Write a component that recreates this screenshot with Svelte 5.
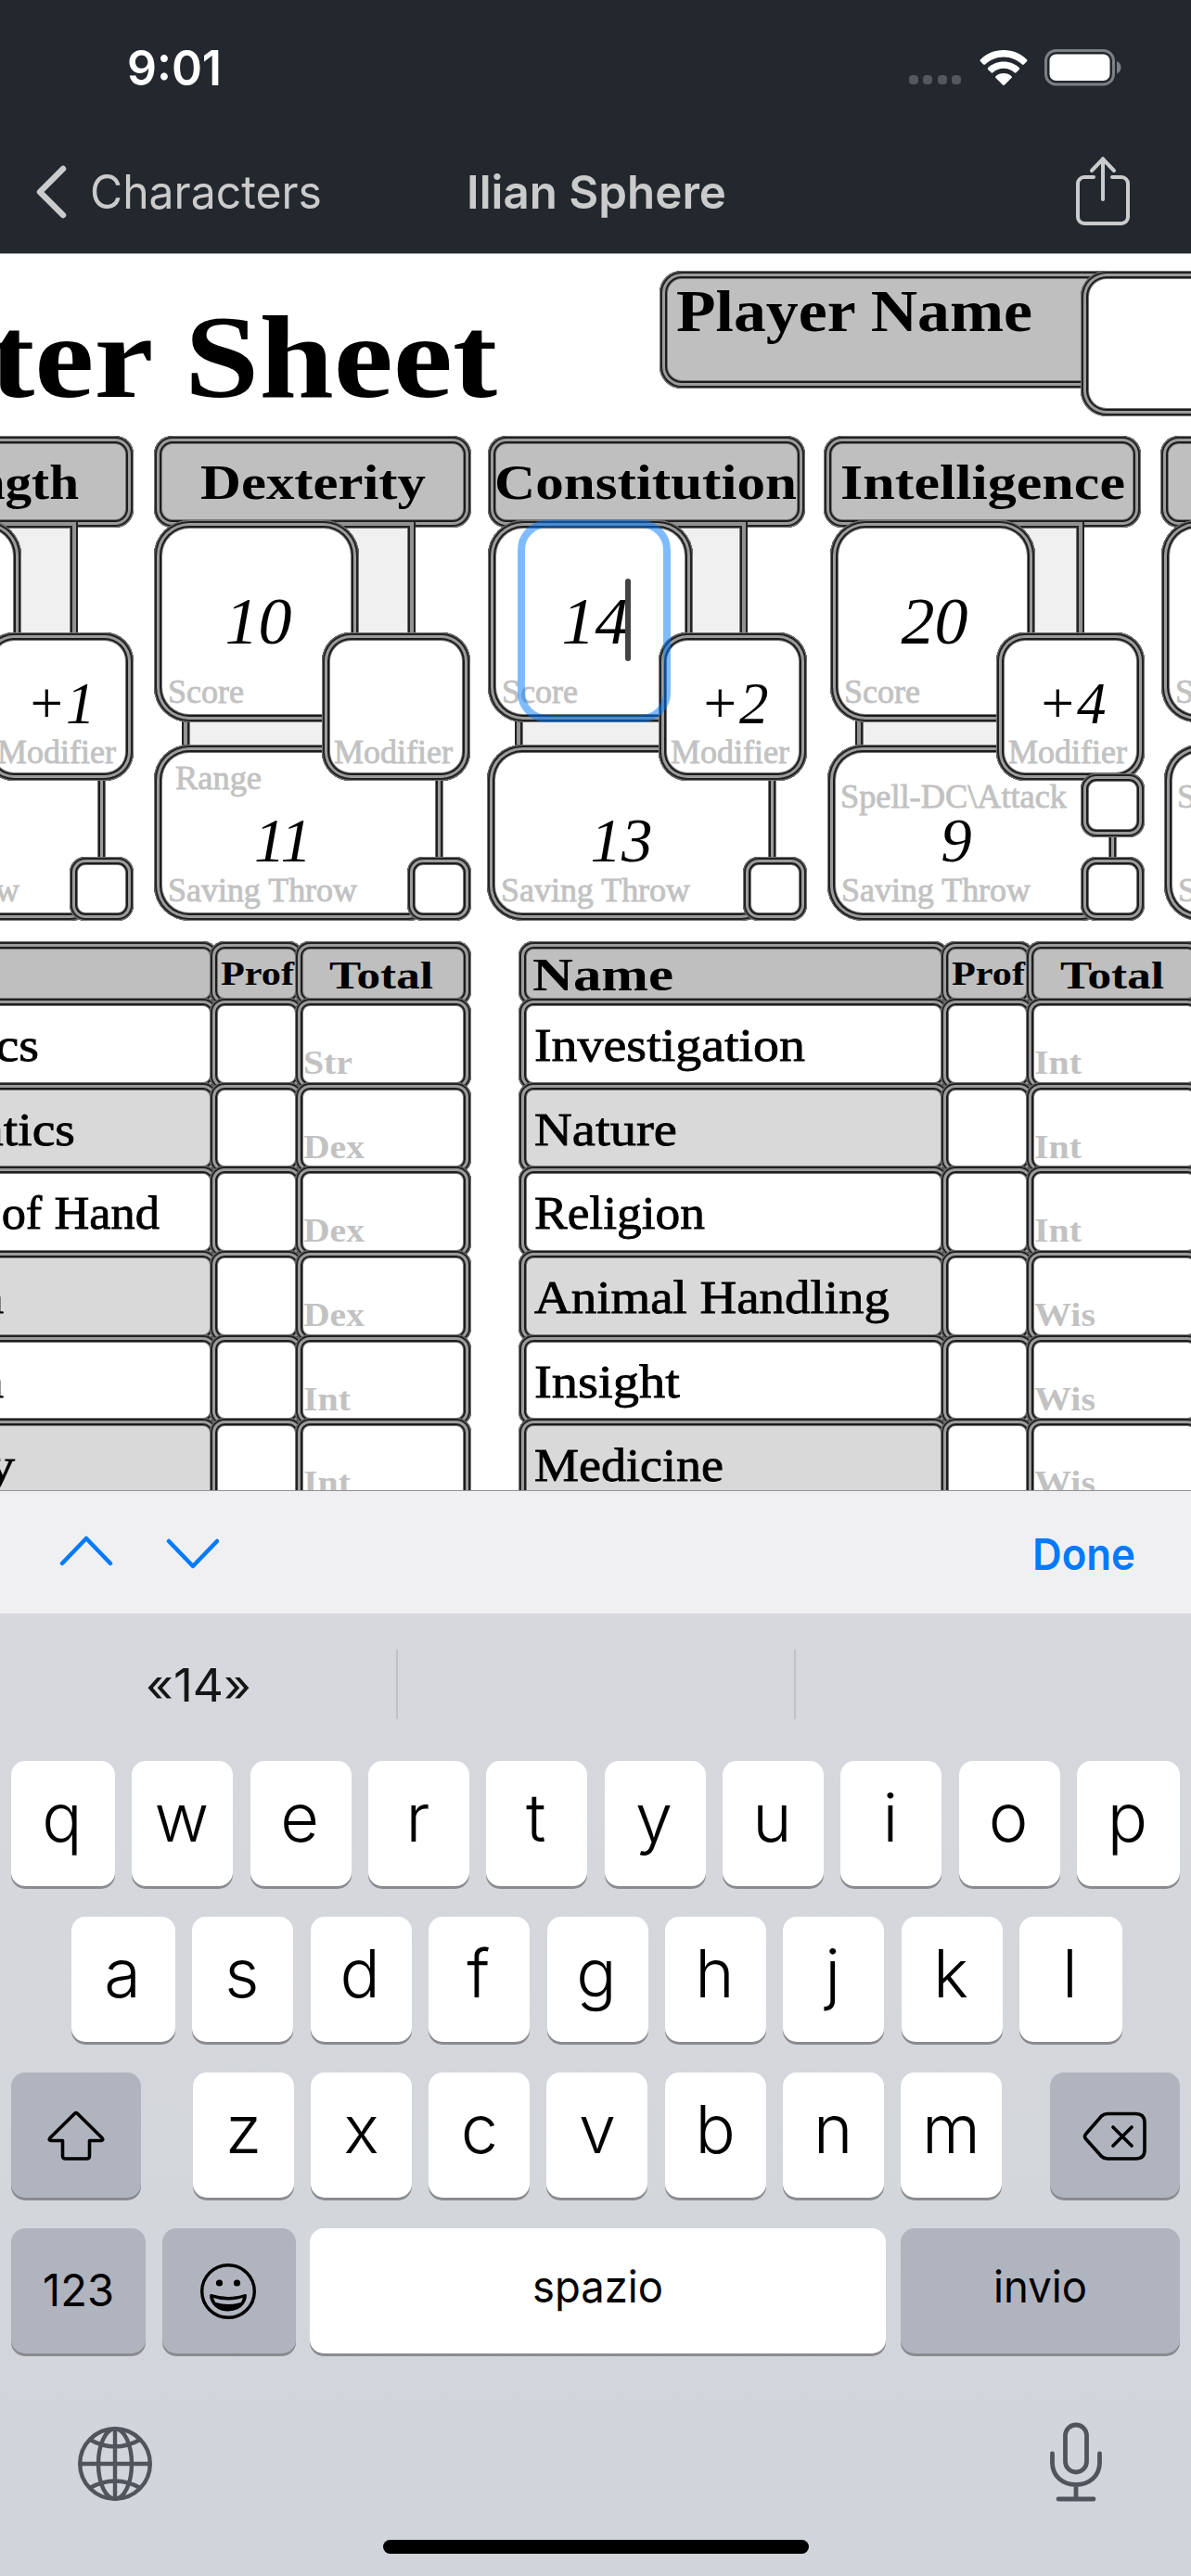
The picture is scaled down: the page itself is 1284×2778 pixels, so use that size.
<script>
  const abilities = [
    { name: 'Strength', nameW: 212, nameX: 71, mod: '+1', score: '12', save: '12', sx: 0, mx: 182, lx: 0, cx: 273, vx: 282, dx: 0 },
    { name: 'Dexterity', nameW: 243, nameX: 50, mod: '', score: '10', save: '11', sub: 'Range', subW: 93, subX: 23, subY: 25, sx: 0, mx: 181, lx: 0, cx: 273, vx: 282, dx: 0 },
    { name: 'Constitution', nameW: 326, nameX: 7, mod: '+2', score: '14', save: '13', focus: true, sx: 0, mx: 184, lx: -1, cx: 275, vx: 280, dx: 6 },
    { name: 'Intelligence', nameW: 307, nameX: 18, mod: '+4', score: '20', save: '9', sub: 'Spell-DC\\Attack', subW: 244, subX: 14, subY: 45, extra: true, sx: 7, mx: 186, lx: 4, cx: 277, vx: 281, dx: 0 },
    { name: 'Wisdom', nameW: 212, nameX: 66, mod: '', score: '', save: '', sub: 'Spell-DC\\Attack', subW: 244, subX: 14, subY: 45, sx: 1, mx: 185, lx: 4, cx: 276, vx: 281, dx: 0 }
  ];
  const tables = [
    {
      side: 'left', title: false,
      rows: [
        ['Athletics', 202, 'Str', 53], ['Acrobatics', 241, 'Dex', 66], ['Sleight of Hand', 332, 'Dex', 66],
        ['Stealth', 164, 'Dex', 66], ['Arcana', 164, 'Int', 51], ['History', 176, 'Int', 51]
      ]
    },
    {
      side: 'right', title: true,
      rows: [
        ['Investigation', 292, 'Int', 51], ['Nature', 154, 'Int', 51], ['Religion', 184, 'Int', 51],
        ['Animal Handling', 383, 'Wis', 66], ['Insight', 157, 'Wis', 66], ['Medicine', 204, 'Wis', 66]
      ]
    }
  ];
  const row1 = [...'qwertyuiop'];
  const row2 = [...'asdfghjkl'];
  const row3 = [...'zxcvbnm'];
</script>

<!-- Text fitted to a given width; the box is as tall as the capitals, so its bottom is the baseline. -->
{#snippet fit(text, width, size, cls)}
  <svg class="fit {cls}" {width} height={Math.round(size * 0.66)} font-size={size}>
    <text x="0" y={Math.round(size * 0.66)} textLength={width} lengthAdjust="spacingAndGlyphs">{text}</text>
  </svg>
{/snippet}

<div class="screen">
  <header>
    <div class="status">
      <div class="time">{@render fit('9:01', 102, 52, 'ui semi white')}</div>
      <div class="indicators">
        <div class="dots"><i></i><i></i><i></i><i></i></div>
        <svg class="wifi" width="52" height="38" viewBox="0 0 52 38" fill="#fff">
          <path d="M26 0C36 0 45 4 51 10.3c.6.6.6 1.3 0 1.900l-3.200 3.200c-.6.6-1.300.6-1.900 0C40.700 10.500 33.800 7.400 26 7.400S11.300 10.500 6.100 15.400c-.6.6-1.300.6-1.900 0L1 12.200c-.6-.6-.6-1.300 0-1.900C7 4 16 0 26 0z" />
          <path d="M26 12.500c6.600 0 12.500 2.500 16.800 6.500.6.6.6 1.300 0 1.900l-3.300 3.300c-.6.6-1.300.6-1.900 0-3.100-2.800-7.100-4.500-11.600-4.500s-8.500 1.700-11.600 4.500c-.6.6-1.300.6-1.900 0l-3.300-3.300c-.6-.6-.6-1.300 0-1.900 4.300-4 10.200-6.500 16.800-6.500z" />
          <path d="M26 25c3.300 0 6.200 1.200 8.500 3.200.6.5.6 1.200 0 1.800l-7.500 7.500c-.6.6-1.400.6-2 0L17.500 30c-.6-.6-.6-1.300 0-1.800 2.300-2 5.200-3.200 8.500-3.200z" />
        </svg>
        <svg class="battery" width="83" height="40" viewBox="0 0 83 40">
          <rect x="1.500" y="1.500" width="73" height="36.500" rx="11" fill="none" stroke="#7d8085" stroke-width="3" />
          <rect x="5.500" y="5.500" width="65" height="28.500" rx="7" fill="#fff" />
          <path d="M78 13c6 2.500 6 11 0 13.500z" fill="#7d8085" />
        </svg>
      </div>
    </div>
    <nav>
      <svg class="back" width="34" height="58" viewBox="0 0 34 58"><path d="M30 4 5 29l25 25" fill="none" stroke="#cbcbcb" stroke-width="6.500" stroke-linecap="round" stroke-linejoin="round" /></svg>
      <div class="crumb">{@render fit('Characters', 250, 50, 'ui light')}</div>
      <div class="name">{@render fit('Ilian Sphere', 280, 50, 'ui semi light')}</div>
      <svg class="share" width="60" height="76" viewBox="0 0 60 76" fill="none" stroke="#cbcbcb" stroke-width="4" stroke-linecap="round" stroke-linejoin="round">
        <path d="M20 23H10a7 7 0 0 0-7 7v36a7 7 0 0 0 7 7h40a7 7 0 0 0 7-7V30a7 7 0 0 0-7-7H40" />
        <path d="M30 47V3M18 16 30 3.500 42 16" />
      </svg>
    </nav>
  </header>

  <main>
    <div class="top">
      <div class="title">{@render fit('Character Sheet', 1004, 128, 'serif bold')}</div>
      <div class="player">
        <div class="frame label">{@render fit('Player Name', 384, 64, 'serif bold')}</div>
        <div class="frame field"></div>
      </div>
    </div>

    <div class="abilities">
      {#each abilities as a}
        <section style="--sx:{a.sx}px;--mx:{a.mx}px;--lx:{a.lx}px;--cx:{a.cx}px;--vx:{a.vx}px;--nx:{a.nameX}px;--dx:{a.dx}px">
          <div class="frame head">{@render fit(a.name, a.nameW, 53, 'serif bold')}</div>
          <div class="link down"></div>
          <div class="link across"></div>
          <div class="frame save">
            <div class="sub" style="--px:{a.subX ?? 0}px;--py:{a.subY ?? 0}px">
              {#if a.sub}{@render fit(a.sub, a.subW, 35, 'serif faint book')}{/if}
            </div>
            <span class="value">{a.save}</span>
            <div class="foot">{@render fit('Saving Throw', 204, 35, 'serif faint book')}</div>
          </div>
          <div class="frame score">
            <span class="value">{a.score}</span>
            <div class="foot">{@render fit('Score', 82, 35, 'serif faint book')}</div>
          </div>
          <div class="frame mod">
            <span class="value">{a.mod}</span>
            <div class="foot">{@render fit('Modifier', 128, 35, 'serif faint book')}</div>
          </div>
          {#if a.extra}<div class="frame check upper"></div>{/if}
          <div class="frame check"></div>
          {#if a.focus}<div class="focus"></div><div class="caret"></div>{/if}
        </section>
      {/each}
    </div>

    <div class="tables">
      {#each tables as t}
        <div class="table {t.side}">
          <div class="row first">
            <div class="frame cell skill">{#if t.title}{@render fit('Name', 152, 50, 'serif bold')}{/if}</div>
            <div class="frame cell prof">{@render fit('Prof', 79, 36, 'serif bold')}</div>
            <div class="frame cell total">{@render fit('Total', 112, 43, 'serif bold')}</div>
          </div>
          {#each t.rows as r}
            <div class="row">
              <div class="frame cell skill">{@render fit(r[0], r[1], 51, 'serif dense')}</div>
              <div class="frame cell prof"></div>
              <div class="frame cell total">{@render fit(r[2], r[3], 36, 'serif bold faint')}</div>
            </div>
          {/each}
        </div>
      {/each}
    </div>
  </main>

  <div class="accessory">
    <svg width="172" height="36" viewBox="0 0 172 36" fill="none" stroke="#007aff" stroke-width="4.500" stroke-linecap="round" stroke-linejoin="round">
      <path d="M3 30 29 3l26 27M118 6l26 27 26-27" />
    </svg>
    {@render fit('Done', 111, 47, 'ui semi blue')}
  </div>

  <div class="keyboard">
    <div class="suggest">
      <div>{@render fit('«14»', 114, 49, 'ui ink')}</div>
      <div></div>
      <div></div>
    </div>
    <div class="keys r1">{#each row1 as k}<div class="key">{k}</div>{/each}</div>
    <div class="keys r2">{#each row2 as k}<div class="key">{k}</div>{/each}</div>
    <div class="keys r3">
      <div class="key dark">
        <svg width="62" height="56" viewBox="0 0 62 56" fill="none" stroke="#000" stroke-width="3.600" stroke-linejoin="round"><path d="M29.300 3.500Q31 2 32.700 3.500L59 29.500Q61 32 58 32.500H45.500V49q0 3-3 3h-23q-3 0-3-3V32.500H4Q1 32 3 29.500z" /></svg>
      </div>
      <div class="letters">{#each row3 as k}<div class="key">{k}</div>{/each}</div>
      <div class="key dark">
        <svg width="70" height="54" viewBox="0 0 70 54" fill="none" stroke="#000" stroke-width="3.600" stroke-linejoin="round" stroke-linecap="round"><path d="M20.500 5Q23.500 2.500 27 2.500H57.500Q67 2.500 67 12V41.500Q67 51 57.500 51H27q-3.500 0-6.500-2.500L3.500 29.500q-2-2.500 0-5zM33 17l20 20M53 17 33 37" /></svg>
      </div>
    </div>
    <div class="keys r4">
      <div class="key dark">{@render fit('123', 77, 48, 'ui')}</div>
      <div class="key dark">
        <svg width="60" height="60" viewBox="0 0 60 60"><circle cx="30" cy="30" r="28.300" fill="none" stroke="#000" stroke-width="3.400" /><circle cx="20.500" cy="21" r="3.600" /><circle cx="39.500" cy="21" r="3.600" /><path d="M11.500 34.500Q30 40.500 48.500 34.500C48 44 40 50 30 50S12 44 11.500 34.500z" stroke="#000" stroke-width="3" stroke-linejoin="round" /><path d="M14 37Q30 42 46 37Q45 40 43.500 42Q30 46 16.500 42Q15 40 14 37z" fill="#b0b5c0" /></svg>
      </div>
      <div class="key">{@render fit('spazio', 141, 48, 'ui')}</div>
      <div class="key dark">{@render fit('invio', 101, 48, 'ui')}</div>
    </div>
    <div class="bottom">
      <svg width="80" height="82" viewBox="0 0 80 82" fill="none" stroke="#50555d" stroke-width="4.400"><circle cx="40" cy="41" r="37.800" /><ellipse cx="40" cy="41" rx="18" ry="37.800" /><path d="M40 3v76M2 41h76M13 15Q40 30 67 15M13 67Q40 52 67 67" /></svg>
      <svg width="56" height="86" viewBox="0 0 56 86" fill="none" stroke="#50555d" stroke-width="4.800" stroke-linecap="round"><rect x="16.500" y="3" width="23" height="51" rx="11.500" /><path d="M2.500 34v10c0 14 11 23.500 25.500 23.500S53.500 58 53.500 44V34M28 67.500v15M9 83h38" /></svg>
    </div>
    <div class="home"></div>
  </div>
</div>

<style>
  :global(body) { margin: 0; }
  .screen { width: 1284px; height: 2778px; overflow: hidden; display: flex; flex-direction: column; font-family: Inter, "Liberation Sans", sans-serif; background: #fff; }
  .screen * { box-sizing: border-box; }
  svg { display: block; flex: none; }
  .fit { overflow: visible; fill: #000; }
  .ui { font-family: Inter, sans-serif; }
  .serif { font-family: "Liberation Serif", serif; }
  .bold { font-weight: 700; }
  .semi { font-weight: 600; }
  .white { fill: #fff; }
  .light { fill: #cbcbcb; }
  .blue { fill: #007aff; }
  .ink { fill: #151515; }
  .faint { fill: #c2c2c2; }
  .book { stroke: #c2c2c2; stroke-width: .8px; }
  .dense { stroke: #000; stroke-width: .8px; }

  header { height: 274px; flex: none; background: #23282e; border-bottom: 1px solid #a5a7a9; }
  .status { height: 146px; display: flex; justify-content: space-between; padding: 53px 75px 0 137px; }
  .time { padding-top: 5px; }
  .indicators { display: flex; }
  .dots { display: flex; gap: 5.500px; padding-top: 28px; margin-right: 20px; }
  .dots i { width: 10px; height: 10px; border-radius: 4px; background: #54585d; }
  .wifi { margin: 1px 18px 0 0; }
  nav { display: flex; align-items: flex-start; padding: 22px 65px 0 38px; }
  .back { margin-top: 10px; }
  .crumb { margin: 24px 0 0 25px; }
  .name { margin: 24px 0 0 156px; }
  .share { margin-left: auto; }

  main { height: 1333px; flex: none; overflow: hidden; background: #fff; }
  .frame { box-shadow: inset 0 0 0 1px #777, inset 0 0 0 3px #222, inset 0 0 0 6px #9b9b9b, inset 0 0 0 8px #1c1c1c, inset 0 0 0 9px #777; background: #fff; }
  .top { height: 196px; display: flex; }
  .title { margin: 70px 0 0 -468px; }
  .player { display: flex; align-items: flex-start; margin: 18px 0 0 175px; }
  .label { width: 494px; height: 127px; flex: none; border-radius: 24px; background: #bfbfbf; padding: 23px 0 0 18px; }
  .field { width: 300px; height: 157px; flex: none; margin-left: -40px; border-radius: 28px; }

  .abilities { display: grid; grid-template-columns: 364px 360px 362px 363px 342px; width: 1791px; height: 545px; margin-left: -198px; }
  section { position: relative; width: 342px; }
  .head { height: 99px; border-radius: 20px; background: #bfbfbf; padding: 33px 0 0 var(--nx); }
  .link { position: absolute; background: #f0f0f0; box-shadow: inset 0 0 0 2px #222, inset 0 0 0 6px #929292, inset 0 0 0 8px #222, inset 0 0 0 9px #777; }
  .down { left: 150px; width: calc(var(--vx) - 150px); top: 91px; height: 140px; }
  .across { left: calc(var(--lx) + 30px); width: 200px; top: 300px; height: 44px; }
  .score, .mod, .save { position: absolute; display: flex; flex-direction: column; align-items: center; }
  .foot { margin-top: auto; align-self: flex-start; }
  .score { left: var(--sx); top: 91px; width: 221px; height: 218px; border-radius: 38px; padding: 73px 0 21px; }
  .score .foot, .save .foot { padding-left: 15px; }
  .mod { left: var(--mx); top: 212px; width: 160px; height: 160px; border-radius: 31px; padding: 46px 0 19px; }
  .mod .foot { padding-left: 13px; }
  .save { left: var(--lx); top: 333px; width: 312px; height: 190px; border-radius: 38px; padding-bottom: 21px; }
  .sub { height: 70px; align-self: flex-start; padding: var(--py) 0 0 var(--px); }
  .value { font: italic 72px/1 "Liberation Serif", serif; color: #000; height: 1em; }
  .score .value { padding-left: calc(4px + var(--dx)); }
  .mod .value { font-size: 63px; padding-left: 3px; }
  .save .value { font-size: 67px; margin-left: calc(var(--dx) * 2); padding-right: 34px; }
  .check { position: absolute; left: var(--cx); top: 454px; width: 69px; height: 69px; border-radius: 17px; }
  .upper { top: 364px; }
  .focus { position: absolute; left: 32px; top: 91px; width: 165px; height: 218px; border: 8px solid rgba(0, 122, 255, .5); border-radius: 32px; }
  .caret { position: absolute; left: 148px; top: 154px; width: 6px; height: 89px; border-radius: 3px; background: #444; }

  .tables { display: flex; }
  .table { flex: none; }
  .left { margin-left: -177px; --skill: 412px; }
  .right { margin-left: 51px; --skill: 464px; }
  .row { display: flex; height: 99.700px; margin-top: -9px; }
  .row.first { height: 70px; margin-top: 0; }
  .cell { border-radius: 16px; margin-left: -9px; }
  .skill { width: var(--skill); margin-left: 0; padding: 34px 0 0 17px; }
  .prof { width: 101px; }
  .total { width: 190px; padding: 58px 0 0 9px; }
  .row:nth-child(odd) .skill { background: #d9d9d9; }
  .row.first .cell { background: #bfbfbf; }
  .row.first .skill { background: #bfbfbf; padding: 20px 0 0 15px; }
  .row.first .prof { padding: 23px 0 0 12px; }
  .row.first .total { padding: 23px 0 0 37px; }

  .accessory { height: 133px; flex: none; border-top: 1px solid #929396; background: #f0f0f2; display: flex; justify-content: space-between; align-items: flex-start; padding: 48px 60px 0 64px; }
  .accessory .fit { margin-top: 6px; }
  .keyboard { flex: 1; background: linear-gradient(#d6d8dd, #d3d6db 60%, #d1d4da); }
  .suggest { height: 159px; display: flex; padding-top: 39px; }
  .suggest div { height: 75px; width: 429px; border-right: 2px solid #bfc1c6; display: flex; justify-content: center; padding-top: 24px; }
  .suggest div:last-child { border: 0; width: 426px; }
  .keys { display: grid; justify-content: space-between; height: 135px; margin-bottom: 33px; padding: 0 12px; }
  .key { height: 135px; border-radius: 15px; background: #fff; box-shadow: 0 3px 0 #898b8f; display: flex; justify-content: center; font-size: 72px; font-weight: 350; line-height: 122px; color: #000; }
  .dark { background: #b0b4bf; }
  .r4 .key { font-weight: 400; }
  .r1 { grid-template-columns: 112px repeat(8, 109px) 111px; }
  .r2 { grid-template-columns: 112px repeat(7, 109px) 111px; padding: 0 74px 0 77px; }
  .r1 .key, .r2 .key { padding-right: 2px; }
  .r3 { grid-template-columns: 140px 872px 140px; }
  .letters { display: grid; grid-template-columns: repeat(7, 109px); justify-content: space-between; margin: 0 -2px 0 2px; }
  .r3 .dark { align-items: center; padding-top: 3px; }
  .r4 { grid-template-columns: 145px 144px 621px 301px; margin-bottom: 0; }
  .r4 .key { padding-top: 48px; }
  .r4 .key:first-child { padding-top: 52px; }
  .r4 .key:nth-child(2) { padding: 38px 2px 0 0; margin: 0 -2px 0 2px; }
  .bottom { display: flex; justify-content: space-between; align-items: flex-start; padding: 74px 96px 0 84px; }
  .bottom svg:first-child { margin-top: 4px; }
  .home { width: 459px; height: 15px; border-radius: 8px; background: #000; margin: 41px auto 0; }
</style>
